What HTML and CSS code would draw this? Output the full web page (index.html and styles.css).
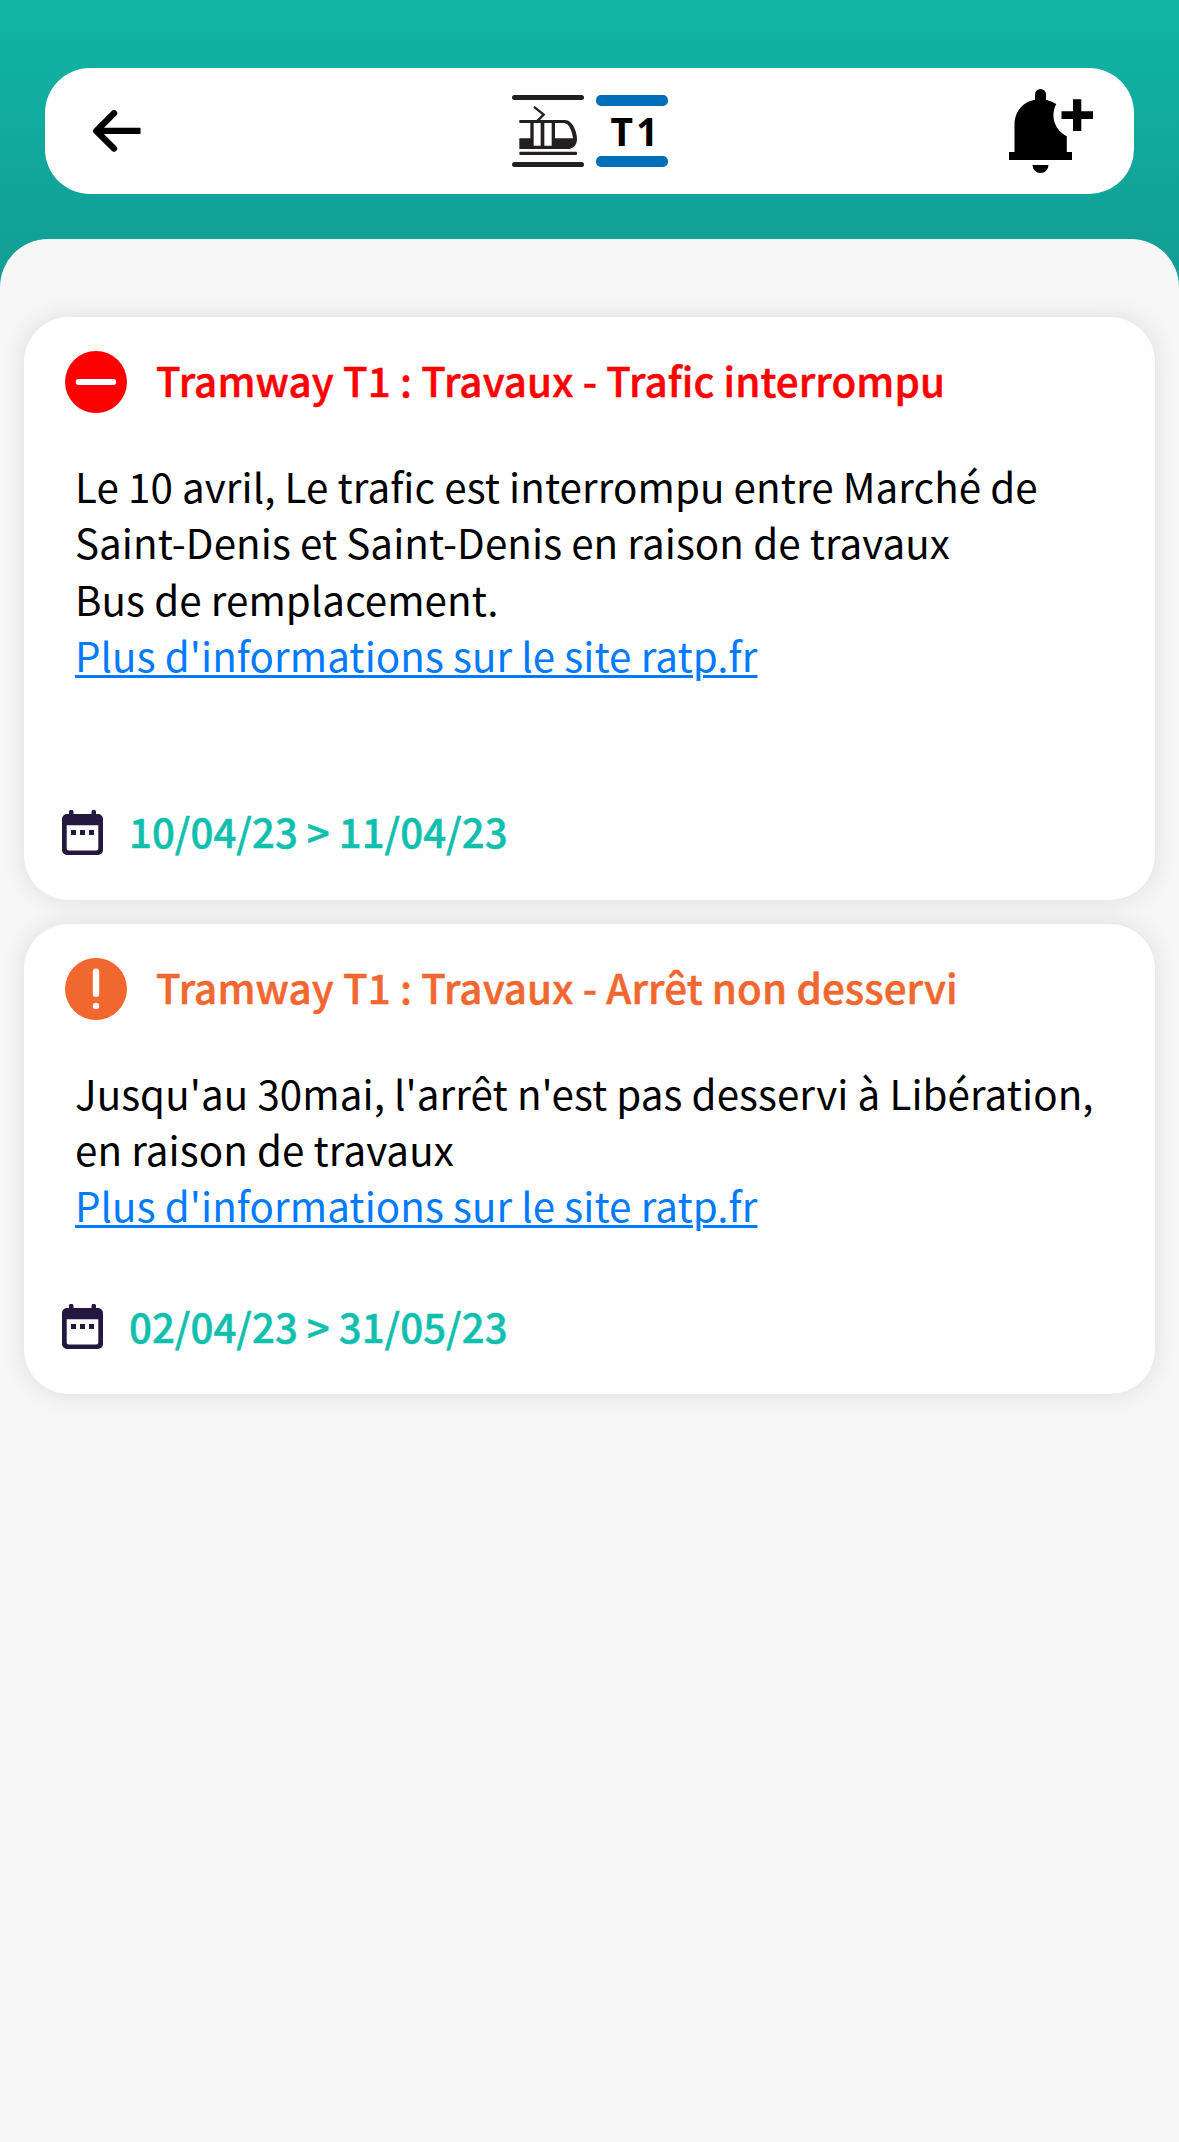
FILE: index.html
```html
<!DOCTYPE html>
<html lang="fr">
<head>
<meta charset="utf-8">
<meta name="viewport" content="width=device-width">
<title>Tramway T1</title>
<link rel="stylesheet" href="styles.css">
</head>
<body>
<header class="header">
  <nav class="bar">
    <button class="bar-button" aria-label="Retour">
      <svg width="48" height="42" viewBox="93 110 48 42" fill="none" stroke="#000" stroke-width="6.4" stroke-linecap="round" stroke-linejoin="round"><path d="M114 113.2 96.3 131 114 148.5"/><path d="M97 130.9H140.5" stroke-linecap="butt"/></svg>
    </button>
    <div class="line">
      <svg class="mode" width="72" height="72" viewBox="66 75 216 216">
        <g fill="#231f20">
          <rect x="66" y="75" width="216" height="15" rx="7.5"/>
          <rect x="66" y="276" width="216" height="15" rx="7.5"/>
          <rect x="88" y="245" width="173" height="10" rx="3"/>
          <path fill-rule="evenodd" d="M88 150H225C247 150 261 185 261 206C261 225 250 237 232 237H88V205H121V159H88ZM131 159V227H152V159ZM163 159V227H185V159ZM195 159V205H249C247 187 238 159 222 159Z"/>
        </g>
        <path d="M134 112 161 134 143 152" fill="none" stroke="#231f20" stroke-width="7" stroke-linecap="round"/>
      </svg>
      <div class="line-code">T1</div>
    </div>
    <button class="bar-button bar-button-end" aria-label="Ajouter une alerte">
      <svg width="85" height="85" viewBox="1009 89 85 85">
        <path d="M1009 152H1014.5V124C1014.5 111 1024 101.500 1035 99.800V94.500A5.500 5.500 0 0 1 1046 94.500V99.800Q1051.500 101 1056.200 104A23.500 23.500 0 0 0 1066.800 136.300V152H1072V160H1009ZM1032.500 165H1048.500A8 8 0 0 1 1032.500 165ZM1073 99.300H1081.300V111.200H1093V119H1081.300V131H1073V119H1061.500V111.200H1073Z"/>
      </svg>
    </button>
  </nav>
</header>
<main class="sheet">
  <article class="card">
    <div class="card-head interrupted">
      <svg width="62" height="62" viewBox="0 0 62 62"><circle cx="31" cy="31" r="31" fill="currentColor"/><rect x="10.700" y="28" width="40.500" height="6" rx="3" fill="#fff"/></svg>
      <h2>Tramway T1 : Travaux - Trafic interrompu</h2>
    </div>
    <p class="card-body">Le 10 avril, Le trafic est interrompu entre Marché de<br>Saint-Denis et Saint-Denis en raison de travaux<br>Bus de remplacement.<br><a href="#">Plus d'informations sur le site ratp.fr</a><br><br></p>
    <div class="dates">
      <svg width="41" height="45" viewBox="0 0 41 45"><path fill="#251840" fill-rule="evenodd" d="M7 4V2a2.200 2.200 0 0 1 4.500 0V4H29.500V2a2.200 2.200 0 0 1 4.500 0V4H36a5 5 0 0 1 5 5V40a5 5 0 0 1-5 5H5a5 5 0 0 1-5-5V9a5 5 0 0 1 5-5ZM4.700 15.300V38.500a2 2 0 0 0 2 2H34.300a2 2 0 0 0 2-2V15.300ZM9 20h5v5H9ZM18 20h5v5h-5ZM27 20h5v5h-5Z"/></svg>
      <time>10/04/23 &gt; 11/04/23</time>
    </div>
  </article>
  <article class="card">
    <div class="card-head skipped">
      <svg width="62" height="62" viewBox="0 0 62 62"><circle cx="31" cy="31" r="31" fill="currentColor"/><rect x="27.800" y="10.500" width="6.400" height="28.500" rx="3.200" fill="#fff"/><circle cx="31" cy="48" r="3.200" fill="#fff"/></svg>
      <h2>Tramway T1 : Travaux - Arrêt non desservi</h2>
    </div>
    <p class="card-body">Jusqu'au 30mai, l'arrêt n'est pas desservi à Libération,<br>en raison de travaux<br><a href="#">Plus d'informations sur le site ratp.fr</a></p>
    <div class="dates">
      <svg width="41" height="45" viewBox="0 0 41 45"><path fill="#251840" fill-rule="evenodd" d="M7 4V2a2.200 2.200 0 0 1 4.500 0V4H29.500V2a2.200 2.200 0 0 1 4.500 0V4H36a5 5 0 0 1 5 5V40a5 5 0 0 1-5 5H5a5 5 0 0 1-5-5V9a5 5 0 0 1 5-5ZM4.700 15.300V38.500a2 2 0 0 0 2 2H34.300a2 2 0 0 0 2-2V15.300ZM9 20h5v5H9ZM18 20h5v5h-5ZM27 20h5v5h-5Z"/></svg>
      <time>02/04/23 &gt; 31/05/23</time>
    </div>
  </article>
</main>
</body>
</html>
```
FILE: styles.css
```css
* { box-sizing: border-box; }

body {
  margin: 0;
  min-height: 2142px;
  display: flex;
  flex-direction: column;
  background: #f6f6f6;
  color: #000;
  font: 400 40.3px/56.3px "Noto Sans CJK SC", sans-serif;
}

svg { display: block; flex: none; }

.header {
  height: 289px;
  padding: 68px 45px 0;
  background: linear-gradient(#10b5a6, #129c94);
}

.bar {
  height: 126px;
  padding: 0 40px 0 48px;
  display: grid;
  grid-template-columns: 1fr auto 1fr;
  align-items: center;
  background: #fff;
  border-radius: 45px;
}

.bar-button {
  justify-self: start;
  padding: 0;
  border: 0;
  background: none;
}

.bar-button-end { justify-self: end; }

.line {
  display: flex;
  gap: 12px;
  margin-right: 8px;
}

.line-code {
  width: 72px;
  height: 72px;
  display: flex;
  flex-direction: column;
  justify-content: space-between;
  text-align: center;
  text-indent: 9px;
  letter-spacing: 3px;
  font: 700 39px/47px "Noto Sans", sans-serif;
}

.line-code::before,
.line-code::after {
  content: "";
  height: 11.4px;
  border-radius: 5px;
  background: #006eb8;
}

.line-code::after { margin-top: 2px; }

.sheet {
  flex: 1;
  margin-top: -50px;
  padding: 78px 24px;
  display: flex;
  flex-direction: column;
  gap: 24px;
  background: #f6f6f6;
  border-radius: 48px 48px 0 0;
}

.card {
  padding: 34px 38px 40px;
  background: #fff;
  border-radius: 45px;
  box-shadow: 0 0 24px rgba(0, 0, 0, 0.1);
}

.card-head {
  display: flex;
  align-items: center;
  gap: 29px;
  margin-left: 3px;
}

.card-head h2 {
  margin: 0;
  padding-bottom: 4px;
  font-size: 40.3px;
  font-weight: 500;
  letter-spacing: 0.1px;
  white-space: nowrap;
  -webkit-text-stroke: 0.5px currentColor;
}

.interrupted { color: #f00; }
.skipped { color: #f0672f; }

.card-body {
  margin: 45px 0 0 13px;
  letter-spacing: 0.08px;
  white-space: nowrap;
}

.card-body a {
  color: #007aff;
  text-decoration-thickness: 3px;
  text-underline-offset: 3px;
}

.dates {
  display: flex;
  align-items: center;
  gap: 26px;
  margin-top: 64px;
  color: #12bfae;
  font-weight: 500;
}

.dates svg { margin-top: 2px; }

.dates time {
  font-size: 40.2px;
  -webkit-text-stroke: 0.5px currentColor;
}
```
